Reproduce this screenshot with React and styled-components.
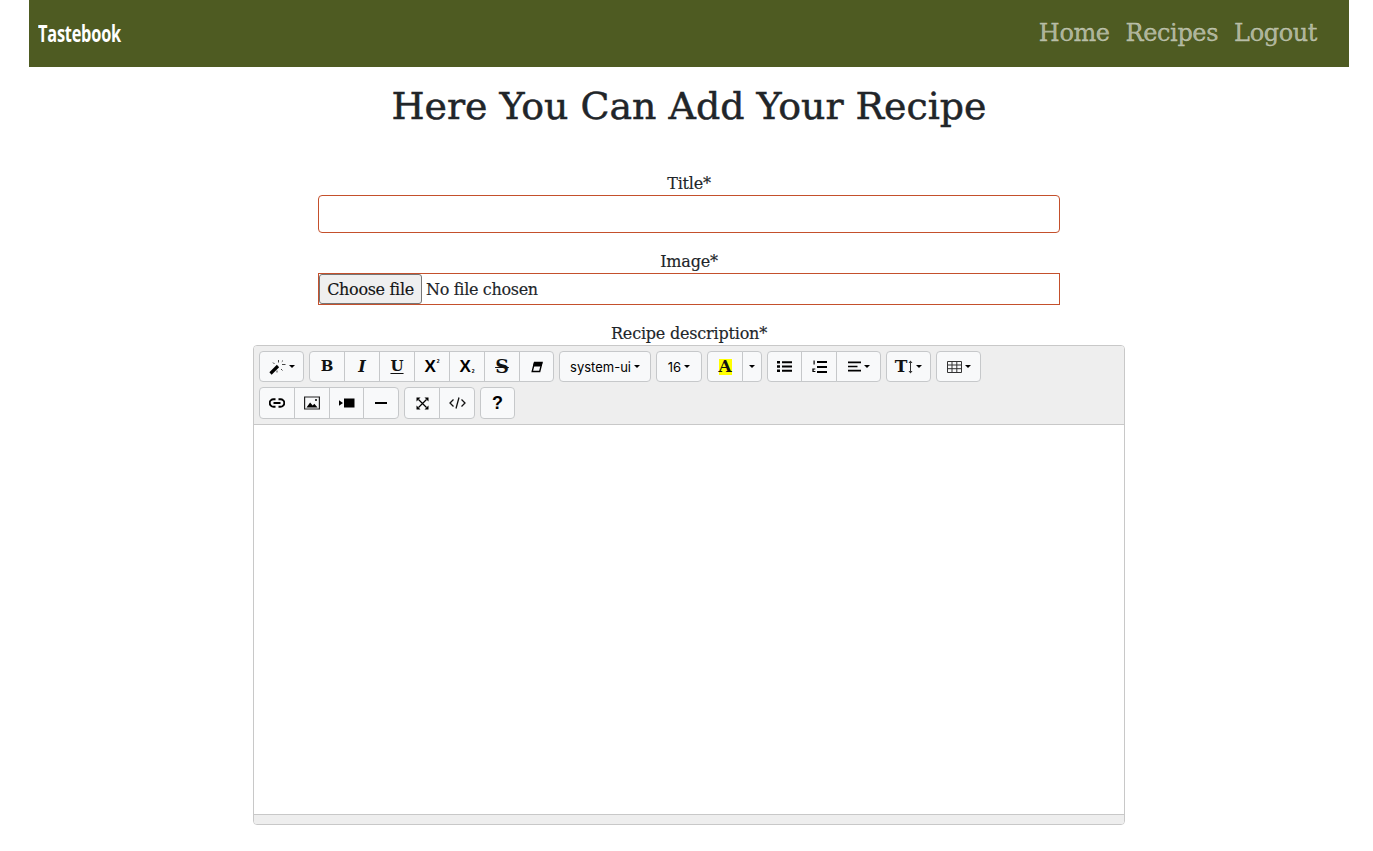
import React from "react";
import styled, { createGlobalStyle } from "styled-components";

const Global = createGlobalStyle`
  html, body { margin: 0; padding: 0; background: #fff; }
  body { font-family: "DejaVu Serif", "Liberation Serif", serif; color: #212529; overflow: hidden; }
  * { box-sizing: border-box; }
`;

const Page = styled.div`
  width: 1320px;
  margin-left: 29px;
  height: 851px;
`;
const NavBar = styled.nav`
  height: 67px;
  background: #4e5b22;
  display: flex;
  align-items: center;
  justify-content: space-between;
  padding: 0 32px 2px 9px;
`;
const Brand = styled.a`
  font-family: "Open Sans", sans-serif;
  font-weight: 700;
  font-size: 23px;
  color: #fff;
  display: inline-block;
  transform: scaleX(0.71);
  transform-origin: left center;
  letter-spacing: -0.3px;
`;
const NavLinks = styled.div`
  display: flex;
  gap: 16px;
`;
const NavLink = styled.a`
  font-size: 24px;
  letter-spacing: -0.4px;
  color: rgba(255, 255, 255, 0.55);
  -webkit-text-stroke: 0.3px rgba(255, 255, 255, 0.55);
`;
const Heading = styled.h1`
  margin: 13px 0 0;
  height: 52px;
  text-align: center;
  font-size: 37.9px;
  line-height: 52px;
  font-weight: 400;
  -webkit-text-stroke: 0.5px #212529;
`;
const Form = styled.form`
  display: flex;
  flex-direction: column;
  align-items: center;
  padding-top: 39px;
`;
const Label = styled.label`
  display: block;
  font-size: 16px;
  line-height: 26px;
  letter-spacing: -0.2px;
  -webkit-text-stroke: 0.15px #212529;
  text-align: center;
  height: 24px;
  margin-top: ${(p) => p.$top || 0}px;
`;
const TextBox = styled.input`
  display: block;
  width: 742px;
  height: 38px;
  border: 1px solid #c4502c;
  border-radius: 4px;
  background: #fff;
`;
const FileBox = styled.div`
  width: 742px;
  height: 32px;
  border: 1px solid #c4502c;
  display: flex;
  align-items: center;
  font-size: 16px;
  letter-spacing: -0.32px;
  -webkit-text-stroke: 0.15px #212529;
  color: #212529;
`;
const FileButton = styled.button`
  width: 103px;
  height: 30px;
  margin: 0 4px 0 0;
  padding: 0;
  background: #efefef;
  border: 1px solid #767676;
  border-radius: 3px;
  font: inherit;
  letter-spacing: inherit;
  color: #111;
`;
const Editor = styled.div`
  width: 872px;
  height: 480px;
  border: 1px solid #c8c8c8;
  border-radius: 4px;
  display: flex;
  flex-direction: column;
  overflow: hidden;
`;
const Toolbar = styled.div`
  height: 79px;
  flex: none;
  background: #eeeeee;
  border-bottom: 1px solid #c8c8c8;
  padding: 5px 5px 0;
  display: flex;
  flex-direction: column;
  gap: 5px;
`;
const Row = styled.div`
  display: flex;
  gap: 5px;
  height: ${(p) => p.$h || 31}px;
`;
const Group = styled.div`
  display: flex;
`;
const Btn = styled.button`
  width: ${(p) => p.$w || 36}px;
  height: 100%;
  padding: 0;
  margin: 0 0 0 -1px;
  background: #f8f9fa;
  border: 1px solid #c6c8ca;
  color: #000;
  font-family: Inter, "Liberation Sans", sans-serif;
  font-size: 13px;
  display: flex;
  align-items: center;
  justify-content: center;
  gap: 3px;
  &:first-child { margin-left: 0; border-radius: 4px 0 0 4px; }
  &:last-child { border-radius: 0 4px 4px 0; }
  &:only-child { border-radius: 4px; }
`;
const Caret = styled.span`
  width: 0;
  height: 0;
  border-left: 3px solid transparent;
  border-right: 3px solid transparent;
  border-top: 3px solid #000;
  flex: none;
`;
const Glyph = styled.span`
  font-family: "DejaVu Serif", serif;
  font-weight: 700;
  font-size: ${(p) => p.$size || 15}px;
  font-style: ${(p) => (p.$italic ? "italic" : "normal")};
  text-decoration: ${(p) => p.$line || "none"};
  text-decoration-thickness: 1px;
  text-underline-offset: 2px;
  line-height: 1;
  color: #111;
`;
const SansGlyph = styled.span`
  font-family: "Liberation Sans", sans-serif;
  font-weight: 700;
  font-size: ${(p) => p.$size || 17}px;
  line-height: 1;
  display: inline-flex;
  align-items: ${(p) => (p.$sub ? "flex-end" : "flex-start")};
`;
const Tiny = styled.span`
  font-size: 5px;
  margin-left: 1px;
  line-height: 7px;
`;
const Highlight = styled.span`
  background: #ffff00;
  width: 13px;
  height: 16px;
  display: flex;
  align-items: flex-end;
  justify-content: center;
`;
const Tall = styled.span`
  display: flex;
  align-items: center;
  gap: 1px;
`;
const Writing = styled.div`
  flex: 1;
  background: #fff;
`;
const StatusBar = styled.div`
  height: 10px;
  flex: none;
  background: #eeeeee;
  border-top: 1px solid #c8c8c8;
`;

const Icon = ({ w = 16, h = 16, children }) => (
  <svg width={w} height={h} viewBox={`0 0 ${w} ${h}`} fill="none" stroke="#000" strokeWidth="1">
    {children}
  </svg>
);

const Wand = () => (
  <Icon w={17} h={16}>
    <path d="M1.5 14.5 L9 7" strokeWidth="3.2" />
    <path d="M9.5 1v2.5M4 3.5l1.5 1.5M13 5.5h3.5M12 10l1.5 1.5M8 11.5v2M14 1.5l-1.2 1.2" strokeWidth="1" stroke="#444" />
  </Icon>
);
const Eraser = () => (
  <Icon w={12} h={12}>
    <path d="M3.5 1.5H11L8.7 10.5H1.2Z" strokeWidth="1.4" />
    <path d="M3.5 1.5H11L10 5H2.6Z" fill="#000" />
  </Icon>
);
const ListUl = () => (
  <Icon w={15} h={13}>
    <path d="M0 1h3v2.4H0zM0 5.3h3v2.4H0zM0 9.6h3V12H0z" fill="#000" stroke="none" />
    <path d="M5 2.2h10M5 6.5h10M5 10.8h10" strokeWidth="2" />
  </Icon>
);
const ListOl = () => (
  <Icon w={15} h={14}>
    <path d="M1.5 0.5h1.2v4H1.5zM0.3 8.5h3v1h-1.6v1.6h1.7v1h-3z" fill="#000" stroke="none" />
    <path d="M5 2h10M5 7h10M5 12h10" strokeWidth="2" />
  </Icon>
);
const AlignLeft = () => (
  <Icon w={13} h={11}>
    <path d="M0 1.3h13M0 5.5h9.5M0 9.7h13" strokeWidth="1.7" />
  </Icon>
);
const UpDown = () => (
  <Icon w={5} h={14}>
    <path d="M2.5 1v12" strokeWidth="1" stroke="#333" />
    <path d="M0.5 3l2-2.6 2 2.6zM0.5 11l2 2.6 2-2.6z" fill="#333" stroke="none" />
  </Icon>
);
const Table = () => (
  <Icon w={15} h={12}>
    <path d="M0.5 0.5h14v11h-14zM0.5 4h14M0.5 7.7h14M5 0.5v11M9.8 0.5v11" stroke="#333" />
  </Icon>
);
const LinkIcon = () => (
  <Icon w={16} h={10}>
    <path d="M6.5 1.2H4.5a3.8 3.8 0 0 0 0 7.6h2M9.5 1.2h2a3.8 3.8 0 0 1 0 7.6h-2" strokeWidth="1.9" />
    <path d="M4.5 5h7" strokeWidth="1.9" />
  </Icon>
);
const ImageIcon = () => (
  <Icon w={16} h={14}>
    <path d="M0.6 1h14.8v12H0.6z" strokeWidth="1.2" stroke="#222" />
    <path d="M2.5 11.5l3.6-5 2.6 3 1.6-1.7 3.3 3.7z" fill="#000" stroke="none" />
    <circle cx="12" cy="4" r="1" fill="#000" stroke="none" />
  </Icon>
);
const Video = () => (
  <Icon w={16} h={10}>
    <path d="M0 2.3L4 5 0 7.7zM5 0.5h10.5v9H5z" fill="#000" stroke="none" />
  </Icon>
);
const Minus = () => (
  <Icon w={12} h={4}>
    <path d="M0 2h12" strokeWidth="2" />
  </Icon>
);
const Expand = () => (
  <Icon w={13} h={13}>
    <path d="M2.5 2.5l8 8M10.5 2.5l-8 8" strokeWidth="1.2" />
    <path d="M0.5 0.5h4l-4 4zM12.5 0.5h-4l4 4zM0.5 12.5h4l-4-4zM12.5 12.5h-4l4-4z" fill="#000" stroke="none" />
  </Icon>
);
const Code = () => (
  <Icon w={17} h={12}>
    <path d="M4.5 2.5L1 6l3.5 3.5M12.5 2.5L16 6l-3.5 3.5M10 0.5L7 11.5" strokeWidth="1.3" stroke="#111" />
  </Icon>
);

export default function App() {
  return (
    <Page>
      <Global />
      <NavBar>
        <Brand>Tastebook</Brand>
        <NavLinks>
          <NavLink>Home</NavLink>
          <NavLink>Recipes</NavLink>
          <NavLink>Logout</NavLink>
        </NavLinks>
      </NavBar>
      <Heading>Here You Can Add Your Recipe</Heading>
      <Form>
        <Label>Title*</Label>
        <TextBox />
        <Label $top={16}>Image*</Label>
        <FileBox>
          <FileButton type="button">Choose file</FileButton>
          No file chosen
        </FileBox>
        <Label $top={16}>Recipe description*</Label>
        <Editor>
          <Toolbar>
            <Row>
              <Group>
                <Btn type="button" $w={45}><Wand /><Caret /></Btn>
              </Group>
              <Group>
                <Btn type="button"><Glyph>B</Glyph></Btn>
                <Btn type="button"><Glyph $italic $size={16}>I</Glyph></Btn>
                <Btn type="button"><Glyph $line="underline">U</Glyph></Btn>
                <Btn type="button"><SansGlyph>X<Tiny>2</Tiny></SansGlyph></Btn>
                <Btn type="button"><SansGlyph $sub>X<Tiny>2</Tiny></SansGlyph></Btn>
                <Btn type="button"><Glyph $size={19} $line="line-through">S</Glyph></Btn>
                <Btn type="button" $w={35}><Eraser /></Btn>
              </Group>
              <Group>
                <Btn type="button" $w={92}>system-ui<Caret /></Btn>
              </Group>
              <Group>
                <Btn type="button" $w={46}>16<Caret /></Btn>
              </Group>
              <Group>
                <Btn type="button"><Highlight><Glyph $size={17}>A</Glyph></Highlight></Btn>
                <Btn type="button" $w={20}><Caret /></Btn>
              </Group>
              <Group>
                <Btn type="button" $w={35}><ListUl /></Btn>
                <Btn type="button"><ListOl /></Btn>
                <Btn type="button" $w={45}><AlignLeft /><Caret /></Btn>
              </Group>
              <Group>
                <Btn type="button" $w={45}><Tall><Glyph $size={17}>T</Glyph><UpDown /></Tall><Caret /></Btn>
              </Group>
              <Group>
                <Btn type="button" $w={45}><Table /><Caret /></Btn>
              </Group>
            </Row>
            <Row $h={32}>
              <Group>
                <Btn type="button"><LinkIcon /></Btn>
                <Btn type="button"><ImageIcon /></Btn>
                <Btn type="button" $w={35}><Video /></Btn>
                <Btn type="button"><Minus /></Btn>
              </Group>
              <Group>
                <Btn type="button"><Expand /></Btn>
                <Btn type="button"><Code /></Btn>
              </Group>
              <Group>
                <Btn type="button" $w={35}><SansGlyph $size={18}>?</SansGlyph></Btn>
              </Group>
            </Row>
          </Toolbar>
          <Writing />
          <StatusBar />
        </Editor>
      </Form>
    </Page>
  );
}
